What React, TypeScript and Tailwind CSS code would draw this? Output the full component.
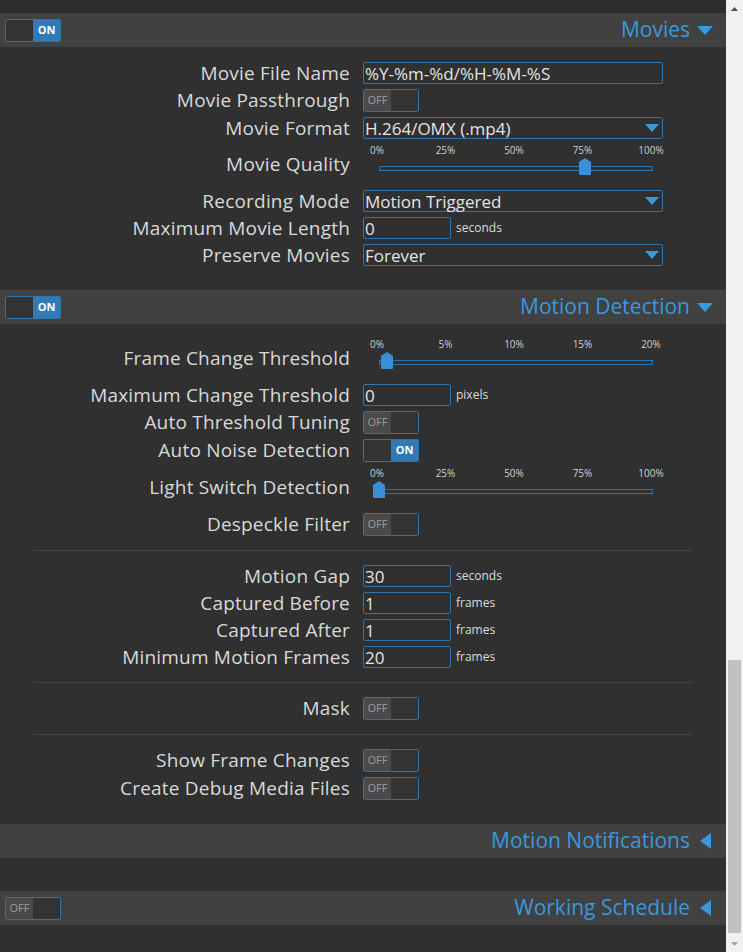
import React from "react";

// ---------------------------------------------------------------------------
// Small building blocks
// ---------------------------------------------------------------------------

function Toggle({ on }: { on: boolean }) {
  return (
    <div className="flex h-[23px] w-[56px] overflow-hidden rounded-[2px] border border-[#2f73ab]">
      {on ? (
        <>
          <div className="w-1/2 bg-[#333333]" />
          <div className="flex w-1/2 items-center justify-center bg-[#327ab5] text-[11px] font-bold text-white">
            ON
          </div>
        </>
      ) : (
        <>
          <div className="flex w-1/2 items-center justify-center bg-[#4a4a4a] text-[11px] text-[#9c9c9c]">
            OFF
          </div>
          <div className="w-1/2 bg-[#333333]" />
        </>
      )}
    </div>
  );
}

function TextInput({ value, wide }: { value: string; wide?: boolean }) {
  return (
    <div
      className={
        wide
          ? "flex h-[22px] w-[300px] items-center rounded-[2px] border border-[#2f73ab] px-px text-[17px] text-[#e4e4e4]"
          : "flex h-[22px] w-[88px] items-center rounded-[2px] border border-[#2f73ab] px-px text-[17px] text-[#e4e4e4]"
      }
    >
      {value}
    </div>
  );
}

function Select({ value }: { value: string }) {
  return (
    <div className="flex h-[22px] w-[300px] items-center justify-between rounded-[2px] border border-[#2f73ab] pl-px pr-[3px] text-[17px] text-[#e4e4e4]">
      <span>{value}</span>
      <svg width="14" height="8" viewBox="0 0 14 8" aria-hidden="true">
        <path d="M0 0 H14 L7 8 Z" fill="#3a98de" />
      </svg>
    </div>
  );
}

function Unit({ children }: { children: React.ReactNode }) {
  return <span className="ml-[5px] text-[12px] text-[#dcdcdc]">{children}</span>;
}

// slider with tick labels; value is a fraction 0..1
function Slider({ ticks, value }: { ticks: string[]; value: number }) {
  return (
    <div className="relative h-[46px] w-[300px]">
      {ticks.map((t, i) => (
        <span
          key={t}
          className="absolute top-[3px] -translate-x-1/2 text-[10px] leading-[12px] text-[#cfcfcf]"
          style={{ left: 14 + (274 * i) / (ticks.length - 1) }}
        >
          {t}
        </span>
      ))}
      <div className="absolute left-[16px] top-[25px] h-[5px] w-[274px] border border-[#2f73ab]" />
      <svg
        className="absolute top-[17px]"
        style={{ left: 16 + 274 * value - 6 }}
        width="12"
        height="17"
        viewBox="0 0 12 17"
        aria-hidden="true"
      >
        <path d="M0 4 L6 0 L12 4 V16 Q12 17 11 17 H1 Q0 17 0 16 Z" fill="#3a8fd6" />
      </svg>
    </div>
  );
}

function Row({
  label,
  h,
  children,
}: {
  label: string;
  h: "input" | "toggle" | "slider";
  children: React.ReactNode;
}) {
  const hc = h === "input" ? "h-[27px]" : h === "toggle" ? "h-[28px]" : "h-[46px]";
  return (
    <div className={"grid grid-cols-2 items-center " + hc}>
      <div className="whitespace-nowrap pr-[13px] text-right text-[19px] tracking-[0.2px] text-[#d9d9d9]">
        {label}
      </div>
      <div className="flex items-center">{children}</div>
    </div>
  );
}

function Divider() {
  return (
    <div className="flex h-[24px] items-center px-[33px]">
      <div className="h-px w-full bg-[#444444]" />
    </div>
  );
}

function SectionHeader({
  title,
  toggle,
  open,
}: {
  title: string;
  toggle?: boolean | null;
  open: boolean;
}) {
  return (
    <div className="flex h-[34px] items-center justify-between bg-[#414141] pl-[5px] pr-[13px]">
      <div>{toggle != null ? <Toggle on={toggle} /> : null}</div>
      {open ? (
        <div className="flex items-center gap-[7px] text-[21px] text-[#3a98de]">
          <span>{title}</span>
          <svg width="16" height="9" viewBox="0 0 16 9" aria-hidden="true">
            <path d="M0 0 H16 L8 9 Z" fill="#3a98de" />
          </svg>
        </div>
      ) : (
        <div className="flex items-center gap-[10px] pr-[2px] text-[21px] text-[#3a98de]">
          <span>{title}</span>
          <svg width="11" height="16" viewBox="0 0 11 16" aria-hidden="true">
            <path d="M11 0 V16 L0 8 Z" fill="#3a98de" />
          </svg>
        </div>
      )}
    </div>
  );
}

// ---------------------------------------------------------------------------
// Page
// ---------------------------------------------------------------------------

export default function App() {
  return (
    <div
      className="flex h-[952px] w-full overflow-hidden bg-[#303030]"
      style={{ fontFamily: '"Open Sans", "DejaVu Sans", sans-serif' }}
    >
      <div className="flex-1">
        <div className="h-[13px] bg-[#2d2d2d]" />

        {/* Movies */}
        <SectionHeader title="Movies" toggle={true} open />
        <div className="pb-[22px] pt-[12px]">
          <Row label="Movie File Name" h="input">
            <TextInput value="%Y-%m-%d/%H-%M-%S" wide />
          </Row>
          <Row label="Movie Passthrough" h="toggle">
            <Toggle on={false} />
          </Row>
          <Row label="Movie Format" h="input">
            <Select value="H.264/OMX (.mp4)" />
          </Row>
          <Row label="Movie Quality" h="slider">
            <Slider ticks={["0%", "25%", "50%", "75%", "100%"]} value={0.75} />
          </Row>
          <Row label="Recording Mode" h="input">
            <Select value="Motion Triggered" />
          </Row>
          <Row label="Maximum Movie Length" h="input">
            <TextInput value="0" />
            <Unit>seconds</Unit>
          </Row>
          <Row label="Preserve Movies" h="input">
            <Select value="Forever" />
          </Row>
        </div>

        {/* Motion Detection */}
        <SectionHeader title="Motion Detection" toggle={true} open />
        <div className="pb-[22px] pt-[11px]">
          <Row label="Frame Change Threshold" h="slider">
            <Slider ticks={["0%", "5%", "10%", "15%", "20%"]} value={0.03} />
          </Row>
          <Row label="Maximum Change Threshold" h="input">
            <TextInput value="0" />
            <Unit>pixels</Unit>
          </Row>
          <Row label="Auto Threshold Tuning" h="toggle">
            <Toggle on={false} />
          </Row>
          <Row label="Auto Noise Detection" h="toggle">
            <Toggle on={true} />
          </Row>
          <Row label="Light Switch Detection" h="slider">
            <Slider ticks={["0%", "25%", "50%", "75%", "100%"]} value={0} />
          </Row>
          <Row label="Despeckle Filter" h="toggle">
            <Toggle on={false} />
          </Row>
          <Divider />
          <Row label="Motion Gap" h="input">
            <TextInput value="30" />
            <Unit>seconds</Unit>
          </Row>
          <Row label="Captured Before" h="input">
            <TextInput value="1" />
            <Unit>frames</Unit>
          </Row>
          <Row label="Captured After" h="input">
            <TextInput value="1" />
            <Unit>frames</Unit>
          </Row>
          <Row label="Minimum Motion Frames" h="input">
            <TextInput value="20" />
            <Unit>frames</Unit>
          </Row>
          <Divider />
          <Row label="Mask" h="toggle">
            <Toggle on={false} />
          </Row>
          <Divider />
          <Row label="Show Frame Changes" h="toggle">
            <Toggle on={false} />
          </Row>
          <Row label="Create Debug Media Files" h="toggle">
            <Toggle on={false} />
          </Row>
        </div>

        {/* collapsed sections */}
        <SectionHeader title="Motion Notifications" open={false} />
        <div className="h-[33px]" />
        <SectionHeader title="Working Schedule" toggle={false} open={false} />
      </div>

      {/* scrollbar */}
      <div className="flex w-[17px] flex-col bg-[#f1f1f1]">
        <div className="flex h-[17px] items-center justify-center">
          <svg width="7" height="4" viewBox="0 0 7 4" aria-hidden="true">
            <path d="M0 4 L3.5 0 L7 4 Z" fill="#505050" />
          </svg>
        </div>
        <div className="flex-1 px-[2px] pb-[2px] pt-[643px]">
          <div className="h-full bg-[#c1c1c1]" />
        </div>
        <div className="flex h-[17px] items-center justify-center">
          <svg width="7" height="4" viewBox="0 0 7 4" aria-hidden="true">
            <path d="M0 0 L3.5 4 L7 0 Z" fill="#a3a3a3" />
          </svg>
        </div>
      </div>
    </div>
  );
}
